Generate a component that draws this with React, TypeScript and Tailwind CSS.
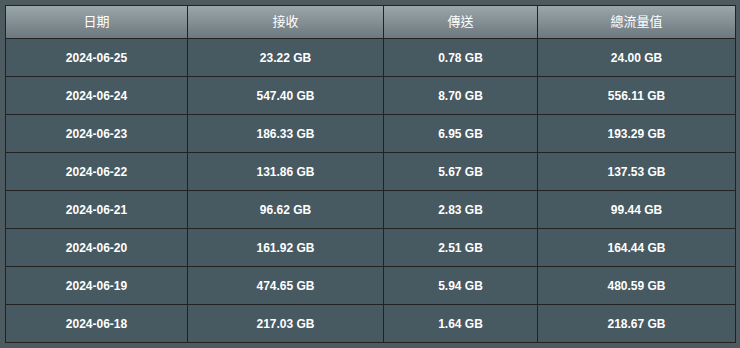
const ROWS = [
  ['2024-06-25', '23.22 GB', '0.78 GB', '24.00 GB'],
  ['2024-06-24', '547.40 GB', '8.70 GB', '556.11 GB'],
  ['2024-06-23', '186.33 GB', '6.95 GB', '193.29 GB'],
  ['2024-06-22', '131.86 GB', '5.67 GB', '137.53 GB'],
  ['2024-06-21', '96.62 GB', '2.83 GB', '99.44 GB'],
  ['2024-06-20', '161.92 GB', '2.51 GB', '164.44 GB'],
  ['2024-06-19', '474.65 GB', '5.94 GB', '480.59 GB'],
  ['2024-06-18', '217.03 GB', '1.64 GB', '218.67 GB'],
];

const HEADERS = ['日期', '接收', '傳送', '總流量值'];

export default function App() {
  return (
    <div
      className="w-[740px] h-[348px] bg-[#4d5a60] p-[5px]"
      style={{ fontFamily: '"Liberation Sans", Arial, "Noto Sans CJK TC", sans-serif' }}
    >
      <table className="w-[730px] table-fixed border-collapse border border-[#222]">
        <colgroup>
          <col className="w-[182px]" />
          <col className="w-[196px]" />
          <col className="w-[154px]" />
          <col className="w-[198px]" />
        </colgroup>
        <thead>
          <tr className="h-[33px] bg-gradient-to-b from-[#9ba6ab] to-[#6b777c]">
            {HEADERS.map((h) => (
              <th
                key={h}
                className="border border-[#222] text-[13px] font-normal text-white text-center"
              >
                {h}
              </th>
            ))}
          </tr>
        </thead>
        <tbody>
          {ROWS.map((row) => (
            <tr key={row[0]} className="h-[38px] bg-[#475961]">
              {row.map((cell, i) => (
                <td
                  key={i}
                  className="border border-[#222] text-[12px] font-bold text-white text-center"
                >
                  {cell}
                </td>
              ))}
            </tr>
          ))}
        </tbody>
      </table>
    </div>
  );
}
